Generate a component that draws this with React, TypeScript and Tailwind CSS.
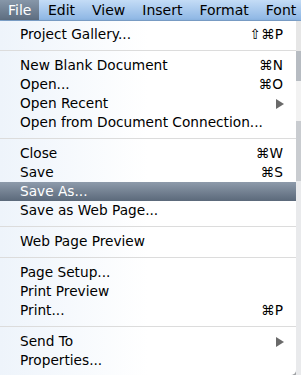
import React from "react";

type Item = { label: string; key?: string; sub?: boolean; on?: boolean } | "sep";

const items: Item[] = [
  { label: "Project Gallery...", key: "⇧⌘P" },
  "sep",
  { label: "New Blank Document", key: "⌘N" },
  { label: "Open...", key: "⌘O" },
  { label: "Open Recent", sub: true },
  { label: "Open from Document Connection..." },
  "sep",
  { label: "Close", key: "⌘W" },
  { label: "Save", key: "⌘S" },
  { label: "Save As...", on: true },
  { label: "Save as Web Page..." },
  "sep",
  { label: "Web Page Preview" },
  "sep",
  { label: "Page Setup..." },
  { label: "Print Preview" },
  { label: "Print...", key: "⌘P" },
  "sep",
  { label: "Send To", sub: true },
  { label: "Properties..." },
];

const menus = ["File", "Edit", "View", "Insert", "Format", "Font"];

export default function App() {
  return (
    <div className="w-[301px] h-[375px] overflow-hidden bg-[#d4d7db] text-black" style={{ fontFamily: '"DejaVu Sans", sans-serif' }}>
      {/* menu bar */}
      <div className="flex h-[21px] items-center bg-gradient-to-b from-[#c4dcf6] to-[#8db6e4] text-[14px] border-b border-[#7ea3cc]">
        {menus.map((m, i) => (
          <div
            key={m}
            className={
              i === 0
                ? "h-full flex items-center px-[8px] bg-gradient-to-b from-[#8797a9] to-[#5d6d80] text-white"
                : "h-full flex items-center px-[8.5px] whitespace-nowrap"
            }
          >
            {m}
          </div>
        ))}
      </div>

      <div className="flex">
        {/* the dropdown */}
        <div className="w-[296px] h-[354px] bg-gradient-to-r from-[#eef4fb] via-white to-white rounded-br-[5px] pt-[4px] shadow-[2px_2px_4px_rgba(0,0,0,0.35)] text-[13.7px]">
          {items.map((it, i) =>
            it === "sep" ? (
              <div key={i} className="h-[12px] flex items-center">
                <div className="w-full h-px bg-[#dcdcdc]" />
              </div>
            ) : (
              <div
                key={i}
                className={
                  it.on
                    ? "h-[19px] flex items-center justify-between pl-[20px] pr-[13px] bg-gradient-to-b from-[#8e9bab] to-[#5b697a] text-white"
                    : "h-[19px] flex items-center justify-between pl-[20px] pr-[13px]"
                }
              >
                <span>{it.label}</span>
                {it.key && <span>{it.key}</span>}
                {it.sub && (
                  <svg width="8" height="10" viewBox="0 0 8 10" className="mr-[-1px]">
                    <path d="M0 0 L8 5 L0 10 Z" fill="#6a6a6a" />
                  </svg>
                )}
              </div>
            )
          )}
        </div>
        {/* window peeking out behind */}
        <div className="flex-1 flex flex-col">
          <div className="h-[30px] bg-[#e6e6e6]" />
          <div className="h-[30px] bg-[#b7bcc2]" />
          <div className="h-[40px] bg-[#f2f2f2]" />
          <div className="h-[60px] bg-[#c9ccd0]" />
          <div className="flex-1 bg-[#e9eaec]" />
        </div>
      </div>
    </div>
  );
}
